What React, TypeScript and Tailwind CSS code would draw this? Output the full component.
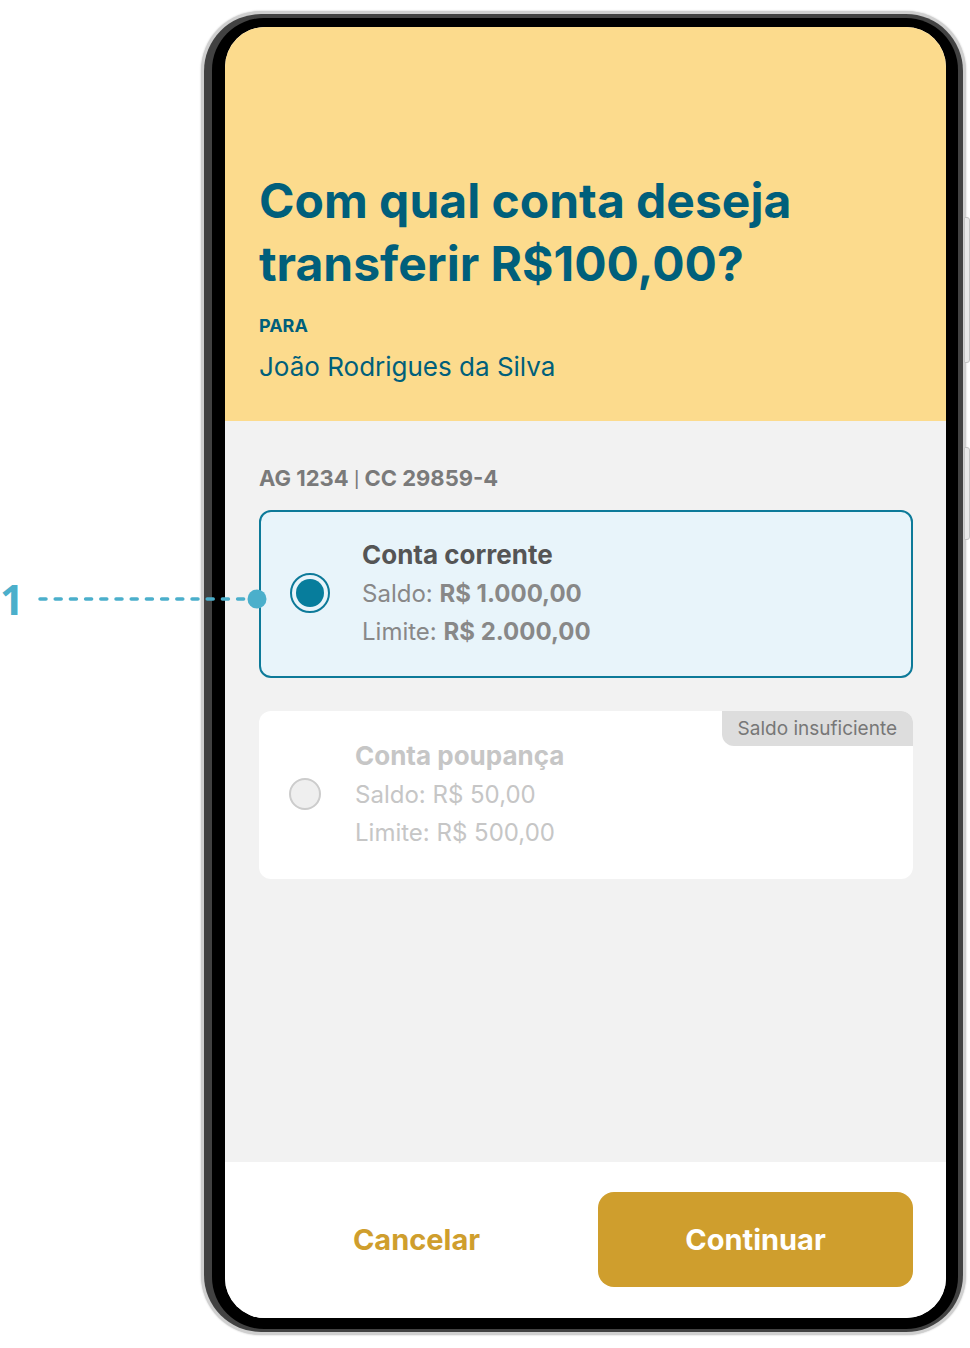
import React from 'react';

const font = { fontFamily: 'Inter, Roboto, "Liberation Sans", sans-serif' };

interface AccountCardProps {
  title: string;
  saldo: string;
  limite: string;
  selected?: boolean;
  disabled?: boolean;
}

function AccountCard({ title, saldo, limite, selected, disabled }: AccountCardProps) {
  if (disabled) {
    return (
      <div className="relative flex items-center rounded-[12px] border-2 border-transparent bg-white pb-[25px] pl-[28px] pt-[23px]">
        <div className="h-[32px] w-[32px] shrink-0 rounded-full border-2 border-[#cccccc] bg-[#efefef]" />
        <div className="ml-[34px] flex flex-col text-[#c6c6c6]">
          <span className="text-[26px] font-bold leading-[40px]">{title}</span>
          <span className="text-[24px] leading-[38px]">Saldo: {saldo}</span>
          <span className="text-[24px] leading-[38px]">Limite: {limite}</span>
        </div>
        <div className="absolute -right-[2px] -top-[2px] rounded-bl-[12px] rounded-tr-[12px] bg-[#dddddd] px-[16px] text-[19px] leading-[35px] text-[#777777]">
          Saldo insuficiente
        </div>
      </div>
    );
  }

  return (
    <div
      className={`flex items-center rounded-[12px] border-2 pb-[25px] pl-[29px] pt-[23px] ${
        selected ? 'border-[#0d7a99] bg-[#e8f4fa]' : 'border-transparent bg-white'
      }`}
    >
      <div className="flex h-[40px] w-[40px] shrink-0 items-center justify-center rounded-full border-[2.5px] border-[#0d7a99]">
        {selected && <div className="h-[28px] w-[28px] rounded-full bg-[#077d9c]" />}
      </div>
      <div className="ml-[32px] flex flex-col text-[#888888]">
        <span className="text-[26px] font-bold leading-[40px] text-[#555555]">{title}</span>
        <span className="text-[24px] leading-[38px]">
          Saldo: <b className="font-bold">{saldo}</b>
        </span>
        <span className="text-[24px] leading-[38px]">
          Limite: <b className="font-bold">{limite}</b>
        </span>
      </div>
    </div>
  );
}

function Annotation() {
  return (
    <div className="absolute left-0 top-[578px] flex items-center">
      <span
        className="w-[30px] text-[42px] font-bold leading-[42px] text-[#4bafcb]"
        style={{ fontFamily: '"Open Sans", sans-serif' }}
      >
        1
      </span>
      <svg width="240" height="24" viewBox="0 0 240 24">
        <line
          x1="10"
          y1="12"
          x2="220"
          y2="12"
          stroke="#4bafcb"
          strokeWidth="3.5"
          strokeLinecap="round"
          strokeDasharray="6 9.2"
        />
        <circle cx="227" cy="12" r="9.5" fill="#4bafcb" />
      </svg>
    </div>
  );
}

export default function App() {
  return (
    <div className="relative h-[1348px] w-[970px] overflow-hidden bg-white" style={font}>
      <div className="ml-[201px] mt-[11px] w-[765px]">
        <div className="relative rounded-[60px] bg-[#cfcfcf] p-[3px] shadow-[0_0_2px_rgba(0,0,0,0.25)]">
          {/* side buttons */}
          <div className="absolute -right-[4px] top-[206px] h-[146px] w-[6px] rounded-r-[3px] border border-[#c4c4c4] bg-[#e9e9e9]" />
          <div className="absolute -right-[4px] top-[436px] h-[93px] w-[6px] rounded-r-[3px] border border-[#c4c4c4] bg-[#e9e9e9]" />
          <div className="rounded-[57px] bg-[#424242] pb-[3px] pl-[8px] pr-[5px] pt-[4px]">
            <div className="rounded-[52px] bg-black pb-[11px] pl-[13px] pr-[12px] pt-[9px]">
              <div className="flex h-[1291px] flex-col overflow-hidden rounded-[40px] bg-[#f2f2f2]">
                <header className="flex h-[394px] shrink-0 flex-col bg-[#fcdb8d] px-[34px] pt-[142px] text-[#005f7b]">
                  <h1 className="text-[48px] font-bold leading-[63px]">
                    Com qual conta deseja
                    <br />
                    transferir R$100,00?
                  </h1>
                  <span className="mt-[20px] text-[18px] font-bold leading-[22px]">PARA</span>
                  <span className="mt-[15px] text-[26px] leading-[30px]">João Rodrigues da Silva</span>
                </header>

                <main className="flex flex-1 flex-col pl-[34px] pr-[33px] pt-[44px]">
                  <p className="text-[22px] font-bold leading-[26px] text-[#7a7a7a]">
                    AG 1234{' '}
                    <span className="font-normal" style={{ fontFamily: 'Roboto, sans-serif' }}>
                      |
                    </span>{' '}
                    CC 29859-4
                  </p>
                  <div className="mt-[18px] flex flex-col gap-[33px]">
                    <AccountCard title="Conta corrente" saldo="R$ 1.000,00" limite="R$ 2.000,00" selected />
                    <AccountCard title="Conta poupança" saldo="R$ 50,00" limite="R$ 500,00" disabled />
                  </div>
                </main>

                <footer className="grid h-[156px] shrink-0 grid-cols-2 gap-[24px] bg-white pb-[31px] pl-[34px] pr-[33px] pt-[30px]">
                  <button className="text-[29px] font-bold text-[#cf9e2d]">Cancelar</button>
                  <button className="rounded-[16px] bg-[#cf9e2d] text-[29px] font-bold text-white">Continuar</button>
                </footer>
              </div>
            </div>
          </div>
        </div>
      </div>
      <Annotation />
    </div>
  );
}
